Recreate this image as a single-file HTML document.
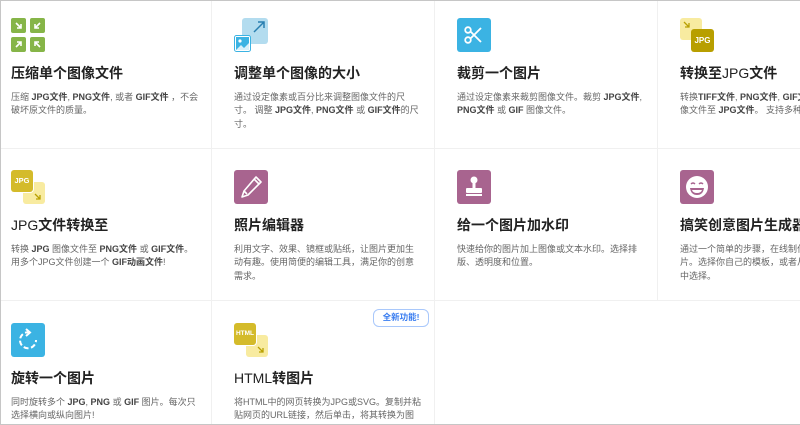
<!DOCTYPE html>
<html><head><meta charset="utf-8"><style>
*{box-sizing:border-box;margin:0;padding:0}
html,body{width:800px;height:425px;overflow:hidden}
body{background:#fff;font-family:"Liberation Sans","Noto Sans CJK SC",sans-serif;position:relative}
.frame{position:absolute;left:0;top:0;width:800px;height:425px;border:1px solid #c6c6c6;border-right:none;pointer-events:none;z-index:5}
.card{position:absolute;width:223px;height:153px;border-right:1px solid #f0f0f0;border-bottom:1px solid #f0f0f0;padding:22px;overflow:hidden}
.c4{width:142px;border-right:none}
.r3{height:124px;border-bottom:none}
.ic{width:34px;height:34px;position:relative}
.t{position:absolute;top:67px;left:22px;font-size:14px;line-height:20px;font-weight:bold;color:#222;white-space:nowrap}
.t .l{font-weight:normal}
.d{position:absolute;top:95px;left:22px;font-size:9px;line-height:13.3px;color:#666;white-space:nowrap}
.d b{color:#444}
.sq{position:absolute;border-radius:3px}
</style></head><body>
<div class="frame"></div>

<div class="card" style="left:-11px;top:-4px">
 <svg class="ic" viewBox="0 0 34 34">
  <g fill="#86b548"><rect x="0" y="0" width="15" height="15" rx="2"/><rect x="19" y="0" width="15" height="15" rx="2"/><rect x="0" y="19" width="15" height="15" rx="2"/><rect x="19" y="19" width="15" height="15" rx="2"/></g>
  <g stroke="#fff" stroke-width="1.6" fill="none"><path d="M5 5l5 5M10 6v4H6"/><path d="M29 5l-5 5M24 6v4h4"/><path d="M5 29l5-5M6 24h4v4"/><path d="M29 29l-5-5M28 24h-4v4"/></g>
 </svg>
 <div class="t">压缩单个图像文件</div>
 <div class="d">压缩 <b>JPG文件</b>, <b>PNG文件</b>, 或者 <b>GIF文件</b> ，不会<br>破坏原文件的质量。</div>
</div>
<div class="card" style="left:212px;top:-4px">
 <div class="ic">
  <div class="sq" style="left:8px;top:0;width:26px;height:26px;background:#b3dcef"></div>
  <svg style="position:absolute;left:0;top:0" width="34" height="34" viewBox="0 0 34 34"><path d="M20 14l10-10M24 4h6v6" stroke="#2a7fb0" stroke-width="1.5" fill="none"/><rect x="0.5" y="17.5" width="16" height="16" rx="2" fill="#fff" stroke="#3bb3e3"/><rect x="2" y="19" width="13" height="13" fill="#3bb3e3"/><circle cx="6" cy="23" r="1.6" fill="#fff"/><path d="M2 32l5-5 3 3 5-5v7z" fill="#fff" opacity=".8"/></svg>
 </div>
 <div class="t">调整单个图像的大小</div>
 <div class="d">通过设定像素或百分比来调整图像文件的尺<br>寸。 调整 <b>JPG文件</b>, <b>PNG文件</b> 或 <b>GIF文件</b>的尺<br>寸。</div>
</div>
<div class="card" style="left:435px;top:-4px">
 <svg class="ic" viewBox="0 0 34 34"><rect width="34" height="34" rx="3" fill="#3bb3e3"/><g stroke="#fff" stroke-width="1.8" fill="none"><circle cx="11" cy="12" r="2.8"/><circle cx="11" cy="22" r="2.8"/><path d="M13.5 13.5L24 24M13.5 20.5L24 10"/></g></svg>
 <div class="t">裁剪一个图片</div>
 <div class="d">通过设定像素来裁剪图像文件。裁剪 <b>JPG文件</b>,<br><b>PNG文件</b> 或 <b>GIF</b> 图像文件。</div>
</div>
<div class="card c4" style="left:658px;top:-4px">
 <div class="ic">
  <div class="sq" style="left:0;top:0;width:22px;height:22px;background:#f8eba0"></div>
  <svg style="position:absolute;left:0;top:0" width="34" height="34"><path d="M4 4l5 5M9 5v4H5" stroke="#b8a000" stroke-width="1.3" fill="none"/></svg>
  <div class="sq" style="left:11px;top:11px;width:23px;height:23px;background:#b89f00;color:#fff;font-size:8px;font-weight:bold;text-align:center;line-height:23px">JPG</div>
 </div>
 <div class="t">转换至<span class="l">JPG</span>文件</div>
 <div class="d">转换<b>TIFF文件</b>, <b>PNG文件</b>, <b>GIF文件</b> 或 RAW图<br>像文件至 <b>JPG文件</b>。 支持多种格式。</div>
</div>

<div class="card" style="left:-11px;top:148px">
 <div class="ic">
  <div class="sq" style="left:12px;top:12px;width:22px;height:22px;background:#f8eba0"></div>
  <svg style="position:absolute;left:0;top:0" width="34" height="34"><path d="M24 24l5 5M29 25v4h-4" stroke="#b8a000" stroke-width="1.3" fill="none"/></svg>
  <div class="sq" style="left:0;top:0;width:22px;height:22px;background:#d4bb2a;color:#fff;font-size:7.5px;font-weight:bold;text-align:center;line-height:22px;box-shadow:0 0 0 1px #fff">JPG</div>
 </div>
 <div class="t"><span class="l">JPG</span>文件转换至</div>
 <div class="d">转换 <b>JPG</b> 图像文件至 <b>PNG文件</b> 或 <b>GIF文件</b>。<br>用多个JPG文件创建一个 <b>GIF动画文件</b>!</div>
</div>
<div class="card" style="left:212px;top:148px">
 <svg class="ic" viewBox="0 0 34 34"><rect width="34" height="34" rx="3" fill="#a8648f"/><g stroke="#fff" stroke-width="1.6" fill="none" stroke-linejoin="round"><path d="M22 7l5 5-13 13-6 2 2-6z"/><path d="M20 9l5 5M10 21l3 3"/></g></svg>
 <div class="t">照片编辑器</div>
 <div class="d">利用文字、效果、镜框或贴纸，让图片更加生<br>动有趣。使用简便的编辑工具，满足你的创意<br>需求。</div>
</div>
<div class="card" style="left:435px;top:148px">
 <svg class="ic" viewBox="0 0 34 34"><rect width="34" height="34" rx="3" fill="#a8648f"/><g fill="#fff"><circle cx="17" cy="10" r="3.5"/><rect x="15.5" y="12" width="3" height="6"/><rect x="9" y="18" width="16" height="5" rx="1"/><rect x="9" y="24" width="16" height="2"/></g></svg>
 <div class="t">给一个图片加水印</div>
 <div class="d">快速给你的图片加上图像或文本水印。选择排<br>版、透明度和位置。</div>
</div>
<div class="card c4" style="left:658px;top:148px">
 <svg class="ic" viewBox="0 0 34 34"><rect width="34" height="34" rx="3" fill="#a8648f"/><circle cx="17" cy="17" r="11" fill="#fff"/><g stroke="#a8648f" stroke-width="1.4" fill="none"><path d="M11 14q2-2 4 0M19 14q2-2 4 0"/></g><path d="M10 18h14q-1 7-7 7t-7-7z" fill="#a8648f"/><path d="M12 20h10q-1 3-5 3t-5-3z" fill="#fff"/></svg>
 <div class="t">搞笑创意图片生成器</div>
 <div class="d">通过一个简单的步骤，在线制作表情包图<br>片。选择你自己的模板，或者从流行模板<br>中选择。</div>
</div>

<div class="card r3" style="left:-11px;top:301px">
 <svg class="ic" viewBox="0 0 34 34"><rect width="34" height="34" rx="3" fill="#3bb3e3"/><g stroke="#fff" stroke-width="2" fill="none"><path d="M19 9.5A8 8 0 1 0 25 17" stroke-dasharray="5 2.5"/><path d="M15 6l4 3.5-4 3.5"/></g></svg>
 <div class="t">旋转一个图片</div>
 <div class="d">同时旋转多个 <b>JPG</b>, <b>PNG</b> 或 <b>GIF</b> 图片。每次只<br>选择横向或纵向图片!</div>
</div>
<div class="card r3" style="left:212px;top:301px">
 <div style="position:absolute;left:161px;top:8px;width:56px;height:18px;border:1.5px solid #a9c8fb;border-radius:6px;color:#3a7df0;font-size:8.5px;font-weight:bold;text-align:center;line-height:15px">全新功能!</div>
 <div class="ic">
  <div class="sq" style="left:12px;top:12px;width:22px;height:22px;background:#f8eba0"></div>
  <svg style="position:absolute;left:0;top:0" width="34" height="34"><path d="M24 24l5 5M29 25v4h-4" stroke="#b8a000" stroke-width="1.3" fill="none"/></svg>
  <div class="sq" style="left:0;top:0;width:22px;height:22px;background:#d4bb2a;color:#fff;font-size:6.5px;font-weight:bold;text-align:center;line-height:22px;box-shadow:0 0 0 1px #fff">HTML</div>
 </div>
 <div class="t"><span class="l">HTML</span>转图片</div>
 <div class="d">将HTML中的网页转换为JPG或SVG。复制并粘<br>贴网页的URL链接，然后单击，将其转换为图<br>片。</div>
</div>
</body></html>
